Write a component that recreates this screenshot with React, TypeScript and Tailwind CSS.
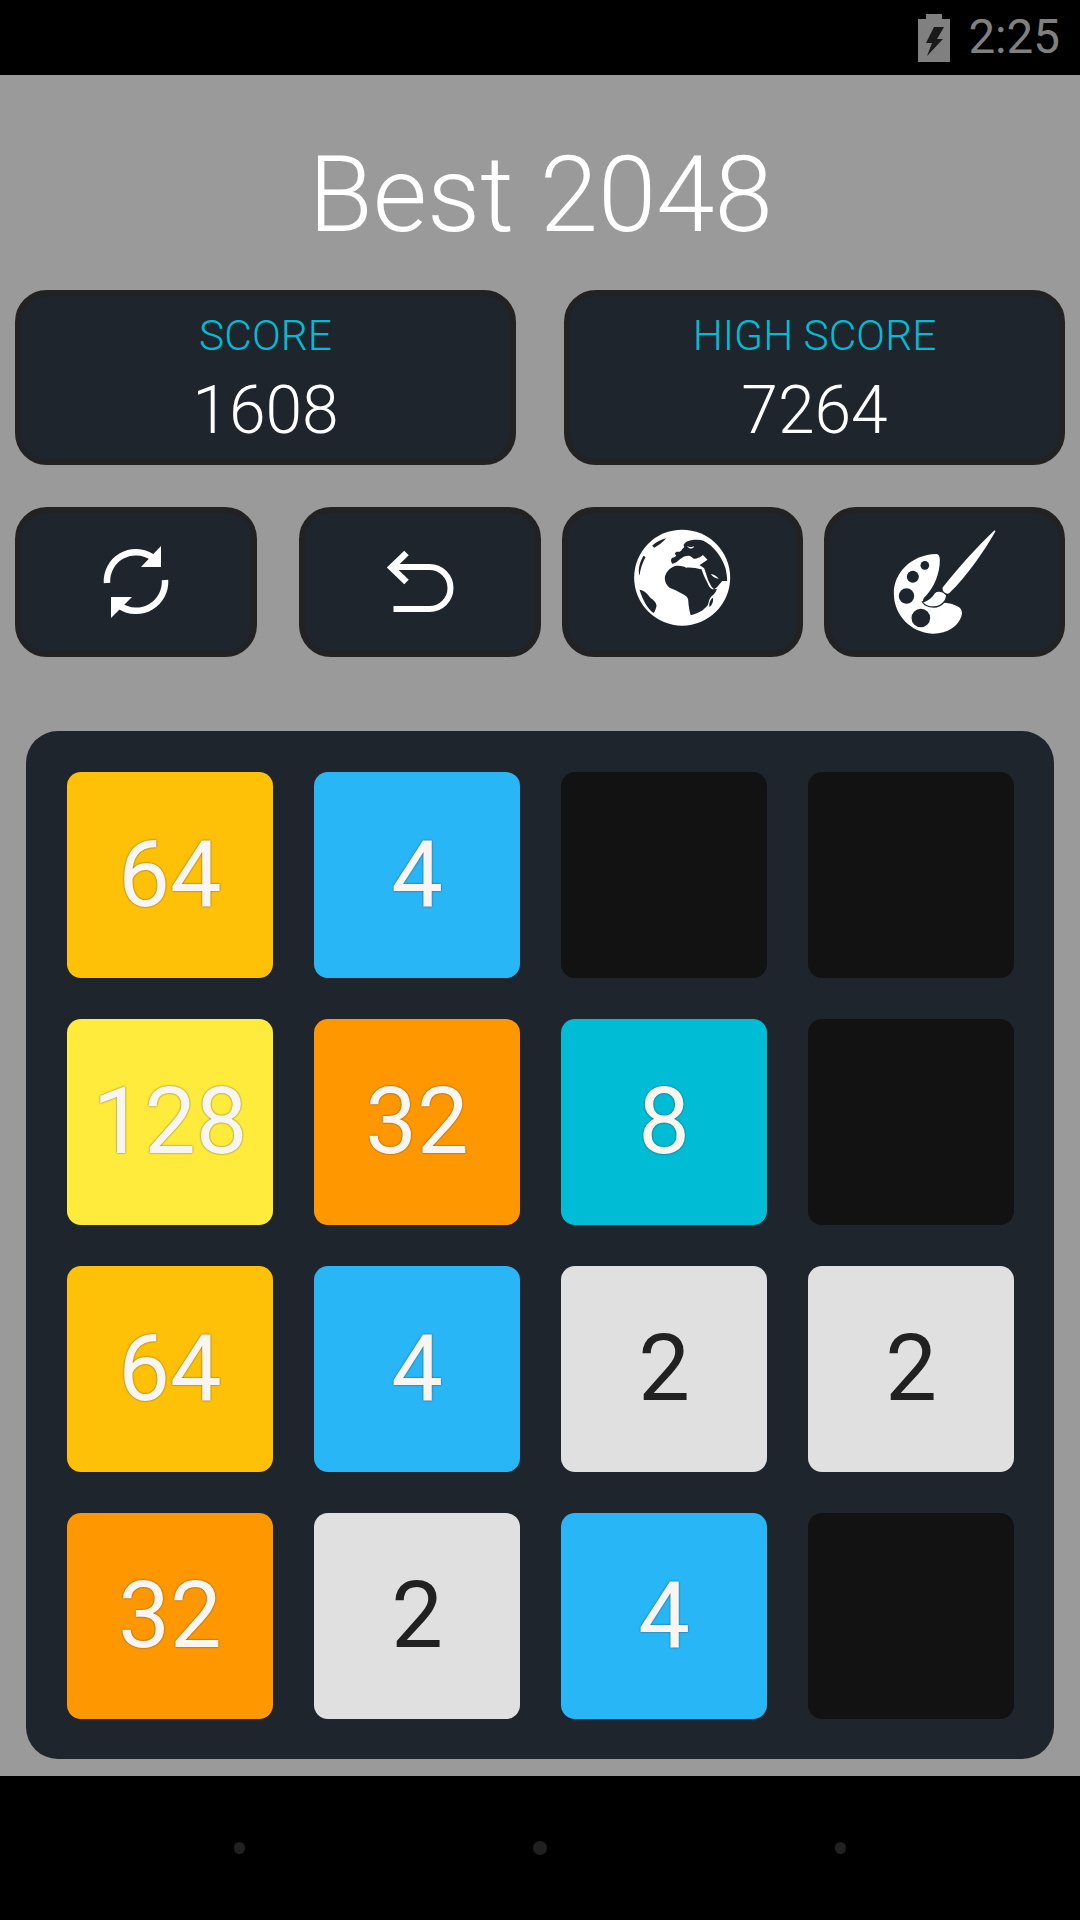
import React from "react";

const tiles: [string | null, string][] = [
  ["64", "bg-[#ffc107]"], ["4", "bg-[#29b6f6]"], [null, ""], [null, ""],
  ["128", "bg-[#ffeb3b]"], ["32", "bg-[#ff9800]"], ["8", "bg-[#00bcd4]"], [null, ""],
  ["64", "bg-[#ffc107]"], ["4", "bg-[#29b6f6]"], ["2", "bg-[#e0e0e0]"], ["2", "bg-[#e0e0e0]"],
  ["32", "bg-[#ff9800]"], ["2", "bg-[#e0e0e0]"], ["4", "bg-[#29b6f6]"], [null, ""],
];

function Tile({ value, color }: { value: string | null; color: string }) {
  if (!value) return <div className="h-[206px] w-[206px] rounded-[14px] bg-[#121212]" />;
  const dark = value === "2";
  return (
    <div
      className={`flex h-[206px] w-[206px] items-center justify-center rounded-[14px] text-[92px] leading-none ${color} ${
        dark ? "text-[#212121]" : "text-[#f9f6f2] [text-shadow:0_0_2px_rgba(0,0,0,0.6)]"
      }`}
    >
      {value}
    </div>
  );
}

function ScoreBox({ label, value }: { label: string; value: string }) {
  return (
    <div className="flex h-[175px] w-[501px] flex-col items-center rounded-[32px] border-[6px] border-[#222222] bg-[#1f252d] pt-[15px] font-light">
      <div className="text-[42.5px] leading-[50px] text-[#00bcd4]">{label}</div>
      <div className="mt-[12px] text-[66px] leading-[76px] text-white">{value}</div>
    </div>
  );
}

function IconButton({ className, children }: { className: string; children: React.ReactNode }) {
  return (
    <div className={`flex h-[150px] items-center justify-center rounded-[32px] border-[6px] border-[#222222] bg-[#1f252d] ${className}`}>
      {children}
    </div>
  );
}

function RefreshIcon() {
  return (
    <svg width="80" height="80" viewBox="96 542 80 80" fill="none">
      <path d="M107 583 A29 29 0 0 1 152 557" stroke="#fff" strokeWidth="6.5" />
      <path d="M161 546 V567 H141 Z" fill="#fff" />
      <path d="M165 580 A29 29 0 0 1 120 606" stroke="#fff" strokeWidth="6.5" />
      <path d="M111 618 V597 H132 Z" fill="#fff" />
    </svg>
  );
}

function UndoIcon() {
  return (
    <svg width="80" height="80" viewBox="379.5 542 80 80" fill="none">
      <path d="M390 567 H429 A21 21 0 0 1 429 609 H393" stroke="#fff" strokeWidth="6" />
      <path d="M406 553 L391 567.5 L406 582" stroke="#fff" strokeWidth="6.5" />
    </svg>
  );
}

function GlobeIcon() {
  const d = "#1f252d";
  return (
    <svg width="170" height="170" viewBox="-82.5 -84 510 510">
      <circle cx="170" cy="158" r="144" fill="#fff" />
      <g fill={d} strokeLinejoin="round">
        {/* Africa */}
        <path d="M118 160 C118 148 128 132 142 126 C152 120 170 122 182 128 C196 126 214 130 228 133 C232 145 238 160 245 172 C250 184 254 190 260 193 L274 192 C272 200 266 208 258 214 C252 220 250 228 248 238 C242 250 224 264 196 271 C192 260 189 240 188 224 C186 214 180 212 170 206 C156 198 144 192 132 188 C124 182 118 172 118 160 Z" />
        {/* Europe, Asia and Arabia */}
        <path d="M140 116 C136 110 135 102 140 98 C148 98 152 94 152 90 C146 88 148 80 156 80 C162 82 168 78 170 72 C176 68 178 66 174 60 C178 52 186 48 196 46 C212 44 224 44 234 47 C264 62 290 96 300 130 C303 144 305 156 305 168 L290 168 C284 176 276 186 266 193 C260 190 254 178 248 166 C244 154 240 140 236 130 C232 126 228 124 222 120 C228 116 240 108 246 104 C240 98 236 94 232 90 C228 92 226 98 218 98 C212 102 206 104 198 96 C192 90 180 92 170 98 C160 104 150 116 140 116 Z" />
        {/* Americas */}
        <path d="M80 62 C90 52 106 44 122 40 C112 52 96 64 86 68 Z" />
        <path d="M54 92 L60 96 C52 112 44 132 42 152 C36 134 44 108 54 92 Z" />
        <path d="M42 194 C56 196 66 206 76 220 C86 226 94 236 93 244 C90 252 90 258 84 264 C66 250 52 226 42 194 Z" />
        {/* Madagascar */}
        <path d="M262 218 C265 226 260 240 252 246 C249 236 254 224 262 218 Z" />
      </g>
      {/* Persian Gulf and Baltic details */}
      <path d="M256 147 C264 148 274 154 280 161 C270 160 260 155 256 147 Z" fill="#fff" />
      <path d="M184 62 C190 66 198 68 206 64 C204 72 192 74 184 62 Z" fill="#fff" />
    </svg>
  );
}

function PaletteIcon() {
  const d = "#1f252d";
  return (
    <svg width="120" height="120" viewBox="73.5 96 360 360">
      <path
        fill="#fff"
        d="M228 192 C234 192 238 198 238 210 C238 250 222 290 196 318 C186 326 184 336 196 344 C210 350 232 350 246 338 C262 338 282 342 296 352 C304 358 306 368 303 378 C294 408 260 432 216 431 C150 428 100 375 100 310 C100 250 150 194 228 192 Z"
      />
      <circle cx="193" cy="226" r="13" fill={d} />
      <circle cx="157" cy="260" r="18" fill={d} />
      <circle cx="138" cy="318" r="23" fill={d} />
      <circle cx="181" cy="384" r="28" fill={d} />
      <path
        fill="#fff"
        stroke={d}
        strokeWidth="4"
        d="M186 336 C204 330 214 322 222 308 C230 300 246 302 258 314 C260 330 244 350 220 351 C206 351 192 346 186 336 Z"
      />
      <path fill="#fff" d="M247 292 C290 238 350 170 402 121 L405 124 C372 182 320 258 266 310 C256 314 243 304 247 292 Z" />
    </svg>
  );
}

function Battery() {
  return (
    <svg width="32" height="48" viewBox="0 0 32 48" className="block">
      <path d="M8 0 H24 V5 H32 V48 H0 V5 H8 Z" fill="#808080" />
      <path d="M16 13 H26 L19 25 H25 L9 42 L14 29 H8 Z" fill="#1a1a1a" />
    </svg>
  );
}

export default function App() {
  return (
    <div className="flex h-[1920px] w-[1080px] flex-col overflow-hidden bg-[#9a9a9a] font-[Roboto,sans-serif]">
      <div className="flex h-[75px] items-center justify-end bg-black pr-[20px]">
        <Battery />
        <div className="ml-[18px] text-[47.5px] leading-none text-[#808080]">2:25</div>
      </div>

      <div className="flex flex-col pb-[17px]">
        <h1 className="flex h-[215px] items-center justify-center pl-[1px] pt-[26px] text-[105px] font-light leading-none text-white">
          Best 2048
        </h1>

        <div className="flex justify-between px-[15px]">
          <ScoreBox label="SCORE" value="1608" />
          <ScoreBox label="HIGH SCORE" value="7264" />
        </div>

        <div className="mt-[42px] flex pl-[15px]">
          <IconButton className="w-[242px]"><RefreshIcon /></IconButton>
          <IconButton className="ml-[42px] w-[242px]"><UndoIcon /></IconButton>
          <IconButton className="ml-[21px] w-[241px]"><GlobeIcon /></IconButton>
          <IconButton className="ml-[21px] w-[241px]"><PaletteIcon /></IconButton>
        </div>

        <div className="ml-[26px] mt-[74px] grid w-[1028px] grid-cols-[repeat(4,206px)] gap-[41px] rounded-[32px] bg-[#1f252d] px-[41px] pb-[40px] pt-[41px]">
          {tiles.map(([v, c], i) => (
            <Tile key={i} value={v} color={c} />
          ))}
        </div>
      </div>

      <div className="flex flex-1 items-center justify-center gap-[288px] bg-black">
        <div className="h-[12px] w-[11px] rounded-full bg-[#202020]" />
        <div className="h-[14px] w-[14px] rounded-full bg-[#202020]" />
        <div className="h-[12px] w-[11px] rounded-full bg-[#202020]" />
      </div>
    </div>
  );
}
